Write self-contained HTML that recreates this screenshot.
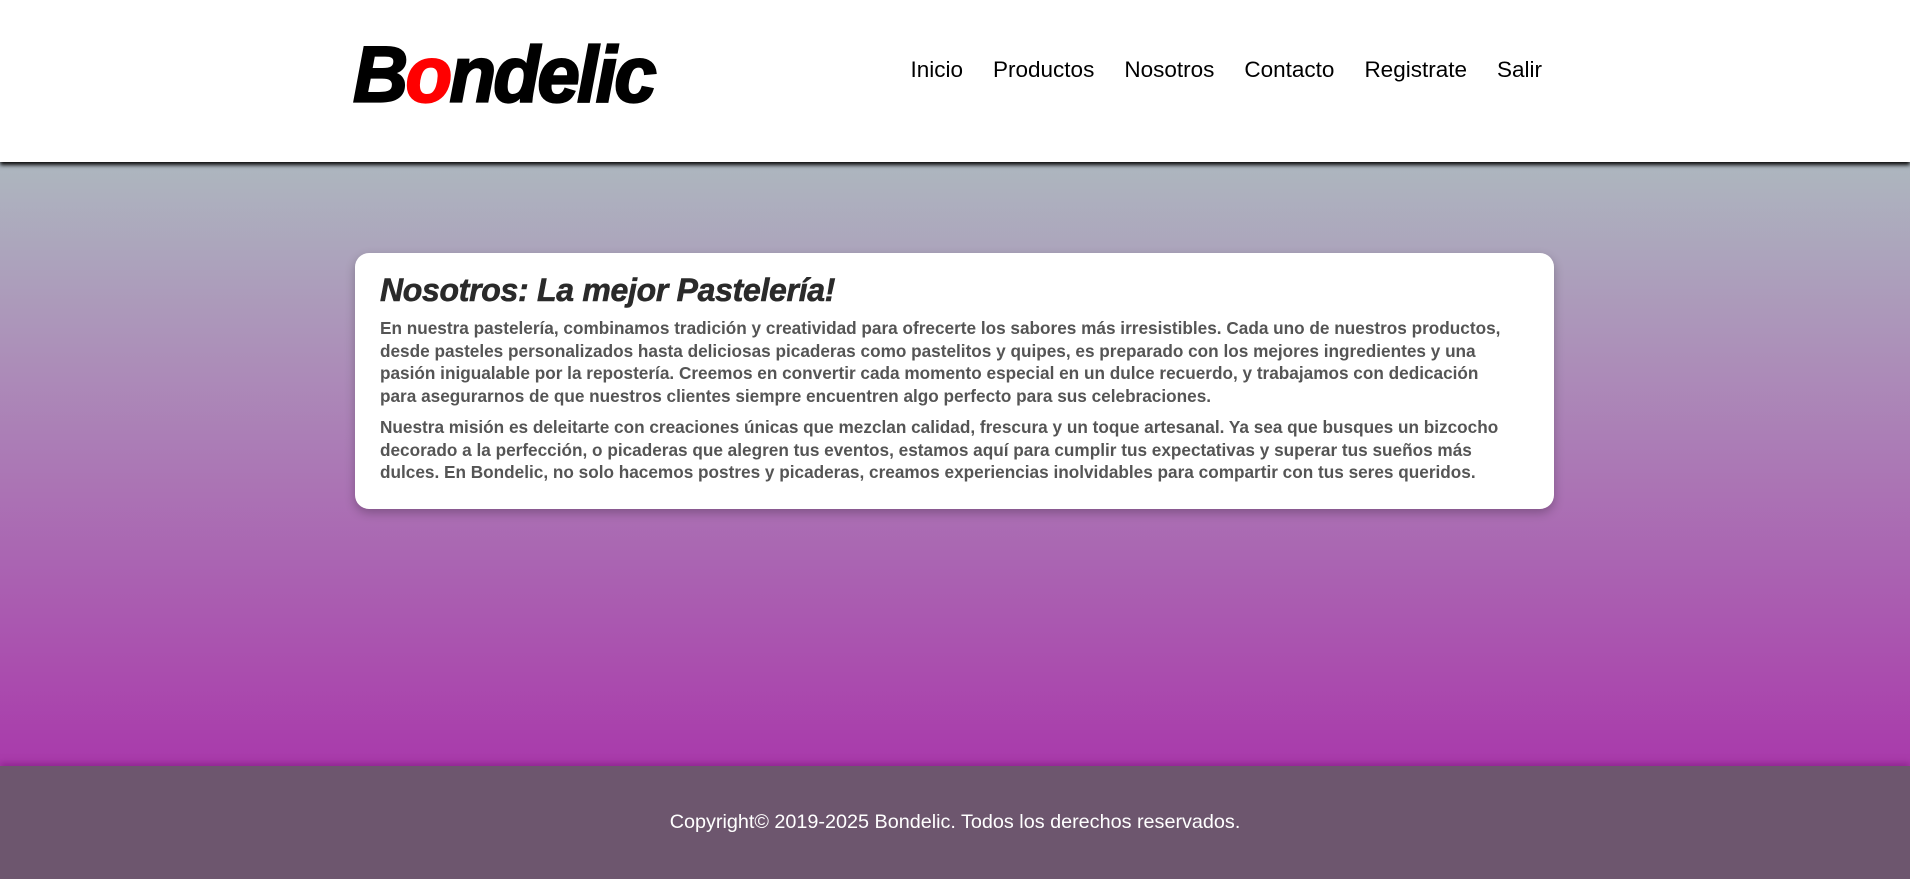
<!DOCTYPE html>
<html><head><meta charset="utf-8"><style>
html,body{margin:0;padding:0;width:1910px;height:879px;overflow:hidden;font-family:"Liberation Sans",Arial,sans-serif}
header{position:absolute;left:0;top:0;width:1910px;height:162px;background:#fff;box-shadow:0 3px 4px rgba(0,0,0,.95);z-index:2}
.logo{position:absolute;left:353px;top:30px;font-size:72px;font-weight:900;font-style:italic;letter-spacing:-2.5px;color:#000;transform:scale(1.06,1.1);transform-origin:top left;-webkit-text-stroke:2px #000}
.logo span{color:#f00;-webkit-text-stroke:2px #f00}
nav{position:absolute;right:368px;top:57px;font-size:22.5px;color:#000}
nav a{margin-left:30px}
main{position:absolute;left:0;top:162px;width:1910px;height:604px;background:linear-gradient(#adb7bf,#a93aab)}
.card{position:absolute;left:355px;top:91px;width:1131px;padding:19px 43px 25px 25px;background:#fff;border-radius:14px;box-shadow:0 4px 10px rgba(0,0,0,.25)}
h1{margin:0 0 8px;font-size:32px;font-style:italic;font-weight:bold;color:#2a2a2a;letter-spacing:-.3px;-webkit-text-stroke:.6px #2a2a2a}
p{margin:0 0 9px;font-size:17.2px;font-weight:bold;color:#555;line-height:22.5px}
footer{position:absolute;left:0;top:766px;width:1910px;height:113px;background:#6d566e;box-shadow:0 -3px 6px rgba(120,20,120,.5);color:#fff;text-align:center;font-size:19.8px;line-height:113px}
</style></head><body>
<header><div class="logo">B<span>o</span>ndelic</div>
<nav><a>Inicio</a><a>Productos</a><a>Nosotros</a><a>Contacto</a><a>Registrate</a><a>Salir</a></nav></header>
<main><div class="card"><h1>Nosotros: La mejor Pastelería!</h1>
<p>En nuestra pastelería, combinamos tradición y creatividad para ofrecerte los sabores más irresistibles. Cada uno de nuestros productos, desde pasteles personalizados hasta deliciosas picaderas como pastelitos y quipes, es preparado con los mejores ingredientes y una pasión inigualable por la repostería. Creemos en convertir cada momento especial en un dulce recuerdo, y trabajamos con dedicación para asegurarnos de que nuestros clientes siempre encuentren algo perfecto para sus celebraciones.</p>
<p style="margin:0">Nuestra misión es deleitarte con creaciones únicas que mezclan calidad, frescura y un toque artesanal. Ya sea que busques un bizcocho decorado a la perfección, o picaderas que alegren tus eventos, estamos aquí para cumplir tus expectativas y superar tus sueños más dulces. En Bondelic, no solo hacemos postres y picaderas, creamos experiencias inolvidables para compartir con tus seres queridos.</p>
</div></main>
<footer>Copyright© 2019-2025 Bondelic. Todos los derechos reservados.</footer>
</body></html>
